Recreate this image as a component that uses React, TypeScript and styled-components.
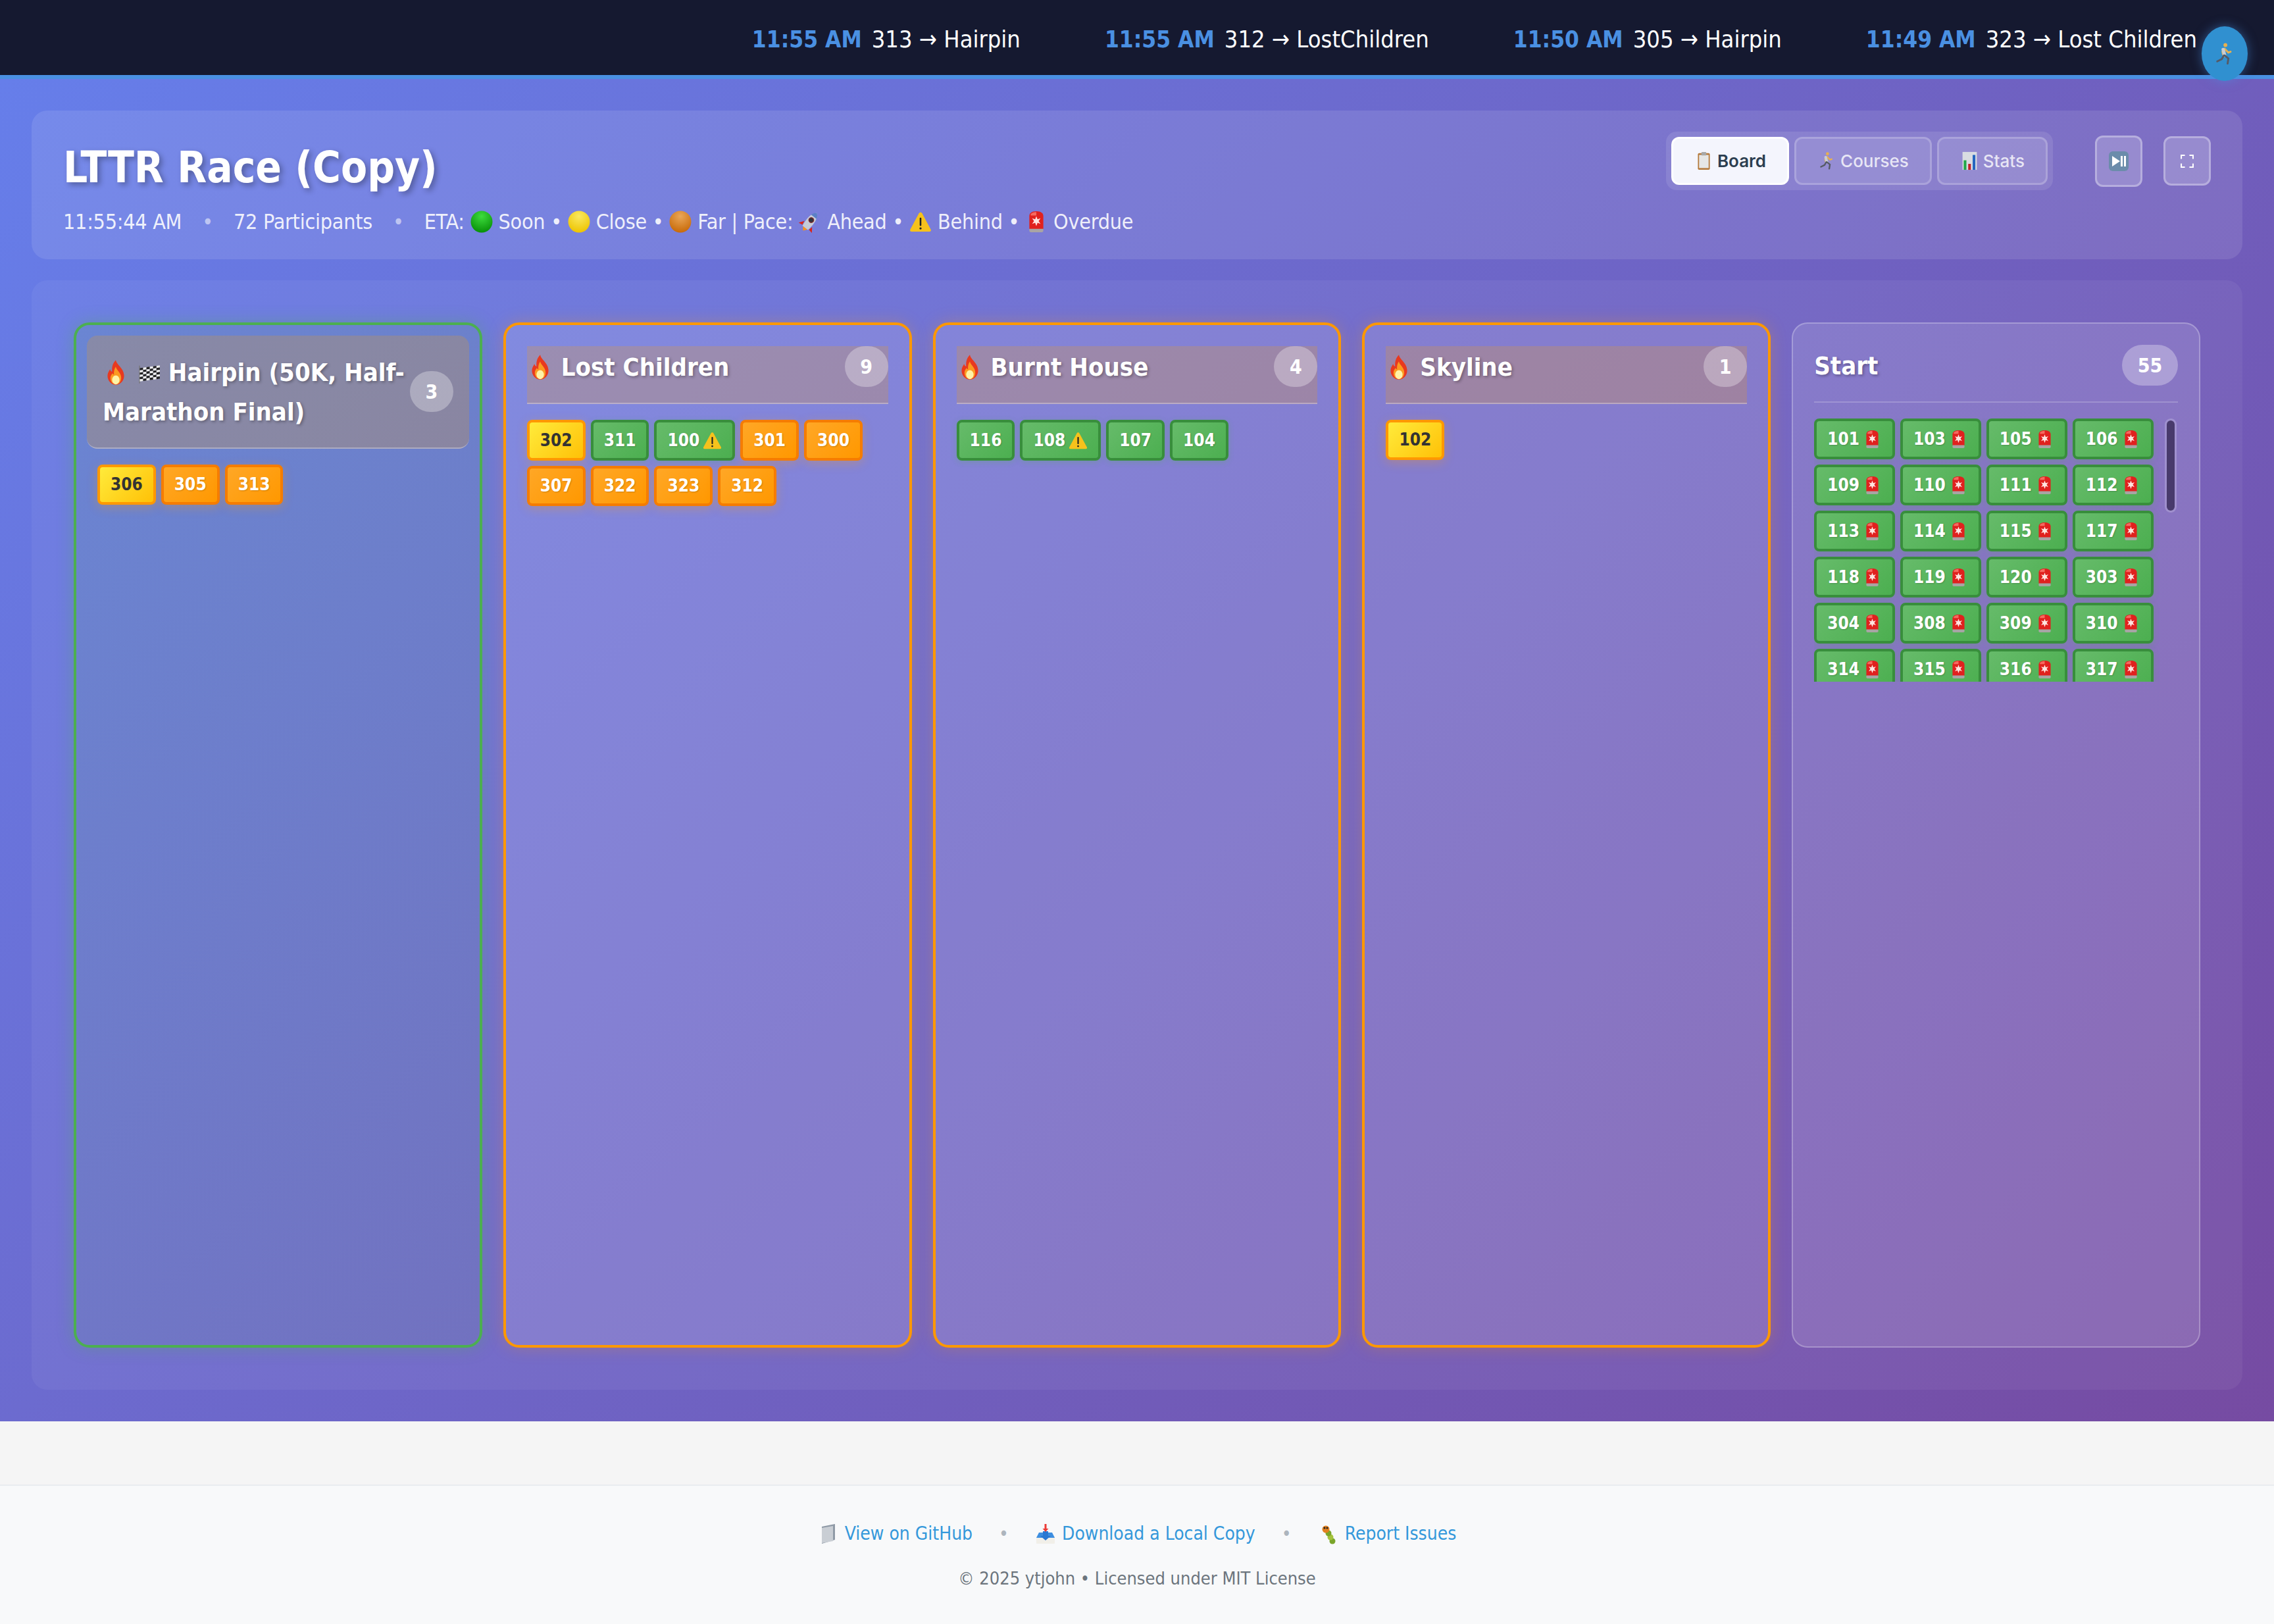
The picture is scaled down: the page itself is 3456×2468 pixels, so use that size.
import React, { FC } from 'react';
import styled, { createGlobalStyle, css } from 'styled-components';

type EmojiKind =
  | 'fire' | 'flag' | 'green' | 'yellow' | 'orange' | 'rocket' | 'warning' | 'siren'
  | 'clipboard' | 'runner' | 'chart' | 'playpause' | 'fullscreen' | 'folder' | 'inbox' | 'bug';

type TileTone = 'yellow' | 'orange' | 'green';

type TileData = { id: number; tone: TileTone; mark?: 'warning' | 'siren' };

const GlobalStyle = createGlobalStyle`
  html, body {
    margin: 0;
    padding: 0;
    background: #f5f5f5;
  }
  body {
    font-family: "DejaVu Sans", Verdana, sans-serif;
    font-stretch: condensed;
  }
  * {
    box-sizing: border-box;
  }
`;

const Page = styled.div`
  width: 3456px;
  height: 2468px;
  display: flex;
  flex-direction: column;
  position: relative;
  overflow: hidden;
`;

const Ticker = styled.div`
  height: 120px;
  flex: none;
  background: #151930;
  border-bottom: 6px solid #4a90e2;
  display: flex;
  align-items: center;
  justify-content: flex-end;
  gap: 128px;
  padding: 4px 117px 0 0;
  font-size: 36px;
  color: #fff;
`;

const TickerItem = styled.div`
  white-space: nowrap;
`;

const TickerTime = styled.span`
  font-size: 35px;
  font-weight: 700;
  color: #4a90e2;
  margin-right: 15px;
`;

const RunnerBadge = styled.div`
  position: absolute;
  top: 40px;
  right: 40px;
  width: 70px;
  height: 83px;
  border-radius: 50%;
  background: #3090d0;
  box-shadow: 0 0 16px rgba(74, 144, 226, 0.5);
  display: flex;
  align-items: center;
  justify-content: center;
`;

const Main = styled.main`
  height: 2040px;
  flex: none;
  background: linear-gradient(135deg, #667eea 0%, #764ba2 100%);
  padding: 48px;
  display: flex;
  flex-direction: column;
  gap: 32px;
`;

const HeaderCard = styled.header`
  height: 226px;
  flex: none;
  border-radius: 24px;
  background: rgba(255, 255, 255, 0.1);
  padding: 32px 48px;
  display: flex;
  justify-content: space-between;
  align-items: flex-start;
`;

const Title = styled.h1`
  margin: 13px 0 0;
  font-size: 65px;
  line-height: 84px;
  font-weight: 700;
  color: #fff;
  text-shadow: 4px 4px 8px rgba(0, 0, 0, 0.3);
`;

const SubLine = styled.div`
  margin-top: 18px;
  display: flex;
  align-items: center;
  gap: 31px;
  font-size: 32px;
  letter-spacing: -0.25px;
  line-height: 44px;
  color: rgba(255, 255, 255, 0.9);
  white-space: nowrap;
`;

const SubDot = styled.span`
  opacity: 0.6;
`;

const HeaderControls = styled.div`
  display: flex;
  align-items: flex-start;
  gap: 32px;
`;

const TabGroup = styled.nav`
  display: flex;
  gap: 8px;
  padding: 8px;
  border-radius: 16px;
  background: rgba(255, 255, 255, 0.1);
  margin-right: 32px;
`;

const Tab = styled.div<{ $active?: boolean }>`
  height: 73px;
  padding: 0 32px;
  display: flex;
  align-items: center;
  gap: 6px;
  border-radius: 12px;
  font-family: Inter, sans-serif;
  font-stretch: normal;
  font-size: 26px;
  border: 3px solid rgba(255, 255, 255, 0.2);
  ${({ $active }) =>
    $active
      ? css`
          background: #f4f5fd;
          border-color: #fff;
          color: #2c3e50;
          font-weight: 600;
        `
      : css`
          background: rgba(255, 255, 255, 0.1);
          color: rgba(255, 255, 255, 0.8);
          font-weight: 500;
        `}
`;

const IconButton = styled.div<{ $tall?: boolean }>`
  width: 72px;
  height: ${({ $tall }) => ($tall ? 78 : 75)}px;
  margin-top: ${({ $tall }) => ($tall ? 6 : 7)}px;
  border-radius: 12px;
  border: 3px solid rgba(255, 255, 255, 0.3);
  background: rgba(255, 255, 255, 0.2);
  display: flex;
  align-items: center;
  justify-content: center;
`;

const BoardPanel = styled.section`
  height: 1686px;
  flex: none;
  border-radius: 24px;
  background: rgba(255, 255, 255, 0.05);
  padding: 64px;
  display: grid;
  grid-template-columns: repeat(5, 1fr);
  gap: 32px;
`;

const Column = styled.div<{ $variant: 'finish' | 'hot' | 'start' }>`
  min-width: 0;
  border-radius: 24px;
  display: flex;
  flex-direction: column;
  ${({ $variant }) =>
    $variant === 'finish' &&
    css`
      border: 4px solid #4caf50;
      background: linear-gradient(170deg, rgba(76, 175, 80, 0.12), rgba(76, 175, 80, 0.08));
      box-shadow: 0 0 24px rgba(76, 175, 80, 0.35);
      padding: 16px 32px;
    `}
  ${({ $variant }) =>
    $variant === 'hot' &&
    css`
      border: 4px solid #ff9800;
      background: rgba(255, 255, 255, 0.12);
      box-shadow: 0 0 24px rgba(255, 152, 0, 0.25);
      padding: 32px;
    `}
  ${({ $variant }) =>
    $variant === 'start' &&
    css`
      border: 2px solid rgba(255, 255, 255, 0.25);
      background: rgba(255, 255, 255, 0.12);
      padding: 32px;
    `}
`;

const ColumnHead = styled.div<{ $variant: 'finish' | 'hot' | 'start' }>`
  display: flex;
  justify-content: space-between;
  margin-bottom: 24px;
  color: #fff;
  ${({ $variant }) =>
    $variant === 'finish' &&
    css`
      margin: 0 -16px 24px;
      padding: 24px;
      height: 172px;
      align-items: center;
      background: rgba(255, 160, 0, 0.2);
      border-radius: 16px;
      border-bottom: 2px solid rgba(255, 255, 255, 0.3);
    `}
  ${({ $variant }) =>
    $variant === 'hot' &&
    css`
      height: 88px;
      padding-bottom: 24px;
      align-items: flex-start;
      background: rgba(255, 160, 0, 0.2);
      border-bottom: 2px solid rgba(255, 255, 255, 0.3);
    `}
  ${({ $variant }) =>
    $variant === 'start' &&
    css`
      height: 88px;
      padding-bottom: 24px;
      align-items: flex-start;
      border-bottom: 2px solid rgba(255, 255, 255, 0.2);
    `}
`;

const ColumnTitle = styled.h2`
  margin: 2px 0 0;
  font-size: 38px;
  line-height: 60px;
  font-weight: 700;
  text-shadow: 2px 2px 4px rgba(0, 0, 0, 0.3);
`;

const CountPill = styled.span<{ $wide?: boolean }>`
  flex: none;
  width: ${({ $wide }) => ($wide ? 85 : 66)}px;
  height: 62px;
  border-radius: 31px;
  background: rgba(255, 255, 255, 0.3);
  display: flex;
  align-items: center;
  justify-content: center;
  font-size: 30px;
  font-weight: 700;
`;

const TileWrap = styled.div`
  display: flex;
  flex-wrap: wrap;
  align-content: flex-start;
  gap: 8px;
`;

const ScrollFrame = styled.div`
  position: relative;
  height: 400px;
`;

const ScrollTileWrap = styled(TileWrap)`
  height: 100%;
  overflow-y: scroll;
  scrollbar-width: none;
`;

const ScrollThumb = styled.div`
  position: absolute;
  top: 0;
  right: 2px;
  width: 18px;
  height: 143px;
  background: #483a6c;
  border: 3px solid rgba(255, 255, 255, 0.2);
  background-clip: padding-box;
  border-radius: 10px;
`;

const toneStyles = {
  yellow: css`
    background: linear-gradient(135deg, #ffeb3b, #ffc107);
    border-color: #ff9800;
    color: #333;
    box-shadow: 0 4px 16px rgba(255, 152, 0, 0.3);
  `,
  orange: css`
    background: linear-gradient(135deg, #ffa726, #ff9800);
    border-color: #f57c00;
    color: #fff;
    text-shadow: 1px 1px 2px rgba(0, 0, 0, 0.2);
    box-shadow: 0 4px 16px rgba(255, 152, 0, 0.3);
  `,
  green: css`
    background: linear-gradient(135deg, #66bb6a, #4caf50);
    border-color: #388e3c;
    color: #fff;
    text-shadow: 1px 1px 2px rgba(0, 0, 0, 0.2);
    box-shadow: 0 2px 8px rgba(76, 175, 80, 0.3);
  `,
};

const Tile = styled.div<{ $tone: TileTone; $marked?: boolean }>`
  flex: none;
  min-width: 88px;
  border: 4px solid;
  border-radius: 8px;
  padding: 8px 16px;
  display: flex;
  align-items: center;
  gap: 5px;
  font-size: 26px;
  font-weight: 700;
  line-height: ${({ $marked }) => ($marked ? 38 : 37)}px;
  justify-content: center;
  ${({ $tone }) => toneStyles[$tone]}
`;

const Spacer = styled.div`
  height: 96px;
  flex: none;
  background: #f5f5f5;
`;

const Footer = styled.footer`
  flex: 1;
  background: #f8f9fa;
  border-top: 2px solid #e9ecef;
  display: flex;
  flex-direction: column;
  align-items: center;
  padding-top: 53px;
`;

const FooterLinks = styled.div`
  display: flex;
  align-items: center;
  gap: 40px;
  font-size: 28px;
  line-height: 40px;
`;

const FooterLink = styled.a`
  color: #3498db;
  display: flex;
  align-items: center;
  gap: 9px;
`;

const FooterDot = styled.span`
  color: #adb5bd;
`;

const Copyright = styled.div`
  margin-top: 30px;
  font-size: 27px;
  line-height: 36px;
  color: #6c757d;
`;

const EmojiSvg = styled.svg`
  display: inline-block;
  vertical-align: -0.18em;
  flex: none;
`;

const Flame = () => (
  <>
    <path d="M16 1c1 6 9 9 10 18 .6 7-4.500 12-10 12S5.400 26 6 19c.3-3 2-5 3-7 .5 2 1.500 3 2.500 3C11 10 12 5 16 1z" fill="#e8391f" />
    <path d="M16 9c.5 4 6 7 6.500 12.500C23 27 19.500 30.500 16 30.500S9 27 9.500 22c.3-2.500 1.500-3.500 2.500-5 .5 1 1 1.500 1.700 1.500C13.500 15 14 12 16 9z" fill="#fb9a22" />
    <ellipse cx="16" cy="25" rx="4.500" ry="5.500" fill="#fff3a8" />
  </>
);

const CheckerFlag = () => (
  <>
    <rect x="3" y="5" width="1.200" height="24" fill="#777" />
    <g transform="skewY(-8) translate(0 3)">
      {Array.from({ length: 36 }, (_, i) => (
        <rect key={i} x={4 + (i % 6) * 4.500} y={6 + Math.floor(i / 6) * 3} width="4.500" height="3" fill={(i + Math.floor(i / 6)) % 2 ? '#eee' : '#222'} />
      ))}
    </g>
  </>
);

const Ball: FC<{ light: string; dark: string; id: string }> = ({ light, dark, id }) => (
  <>
    <defs>
      <radialGradient id={id} cx="50%" cy="25%" r="75%">
        <stop offset="0" stopColor={light} />
        <stop offset="1" stopColor={dark} />
      </radialGradient>
    </defs>
    <circle cx="16" cy="16" r="15.500" fill={`url(#${id})`} />
  </>
);

const Rocket = () => (
  <g transform="rotate(38 16 16)">
    <path d="M9 20l-5 7 6-1zM23 20l5 7-6-1z" fill="#d9261c" />
    <path d="M12 27l4 5 4-5z" fill="#f7941e" />
    <path d="M16 0c6 5 7 14 5 27H11C9 14 10 5 16 0z" fill="#c6ccd8" />
    <path d="M16 0c2.500 2 4 4 5 7H11c1-3 2.500-5 5-7z" fill="#5b7fc7" />
    <circle cx="16" cy="13" r="3.500" fill="#30343f" stroke="#8b2a2a" strokeWidth="1.200" />
  </g>
);

const WarningSign = () => (
  <>
    <path d="M16 2.500c1 0 1.700.5 2.300 1.500l12.400 23c.8 1.600-.1 3-1.900 3H3.200c-1.800 0-2.700-1.400-1.900-3l12.400-23c.6-1 1.300-1.500 2.300-1.500z" fill="#f6c21c" />
    <rect x="14.800" y="10" width="2.400" height="12" rx="1" fill="#222" />
    <circle cx="16" cy="25.500" r="1.600" fill="#222" />
  </>
);

const Siren = () => (
  <>
    <rect x="6" y="25" width="20" height="6" rx="2" fill="#a9a4a4" />
    <path d="M6 26V8c0-4 3-7 10-7s10 3 10 7v18z" fill="#e0211e" />
    <path d="M8 5c2-2 4-3 8-3v5H8z" fill="#f56a60" />
    <path d="M16 8l1.700 4.500 4.300-1.500-2.700 4 2.700 4-4.300-1.500-1.700 4.500-1.700-4.500-4.300 1.500 2.700-4-2.700-4 4.300 1.500z" fill="#ffe4e0" />
  </>
);

const Clipboard = () => (
  <>
    <rect x="6" y="3" width="20" height="28" rx="2" fill="#b57a3c" />
    <rect x="8" y="6" width="16" height="22" fill="#e6e6e6" />
    <rect x="12" y="1" width="8" height="6" rx="1" fill="#a8a8a8" />
  </>
);

const Runner = () => (
  <g stroke="#e9b04e" strokeWidth="2.600" strokeLinecap="round" fill="none">
    <circle cx="17" cy="4" r="2.600" fill="#e9b04e" stroke="none" />
    <path d="M16 9l-3 4 1 4M16 9l5 5 3-1" />
    <path d="M14 10l2 8" stroke="#c8ccd4" strokeWidth="4.500" />
    <path d="M16 18l5 4-1 7M15 18l-3 5-6 3" stroke="#555a66" />
  </g>
);

const Chart = () => (
  <>
    <rect x="4" y="1" width="24" height="30" fill="#d9dce2" />
    <rect x="6" y="15" width="4.500" height="16" fill="#20a84a" />
    <rect x="13.500" y="21" width="4.500" height="10" fill="#c4212c" />
    <rect x="21" y="6" width="4.500" height="25" fill="#2566c0" />
  </>
);

const PlayPause = () => (
  <>
    <rect x="1" y="1" width="30" height="30" rx="6" fill="#6b8cab" />
    <path d="M6 8l12 8-12 8z" fill="#fff" />
    <rect x="19" y="8" width="3" height="16" fill="#fff" />
    <rect x="24" y="8" width="3" height="16" fill="#fff" />
  </>
);

const Fullscreen = () => (
  <path d="M3 11V3h8M21 3h8v8M29 21v8h-8M11 29H3v-8" stroke="#fff" strokeWidth="3" fill="none" />
);

const Folder = () => (
  <>
    <path d="M6 5l20-4v24L6 31z" fill="#8f9aa6" />
    <path d="M6 7l17-3v23L6 30z" fill="#c9ced4" />
  </>
);

const Inbox = () => (
  <>
    <path d="M2 20h28v10a1 1 0 0 1-1 1H3a1 1 0 0 1-1-1z" fill="#f1efe9" />
    <path d="M6 14h20l4 8H2z" fill="#3d8ee0" />
    <path d="M12 12h8v7h4l-8 7-8-7h4z" fill="#2a78d2" />
    <path d="M14.500 1h3v7h3l-4.500 5-4.500-5h3z" fill="#ec3b36" />
  </>
);

const Bug = () => (
  <>
    <circle cx="22" cy="27" r="4.500" fill="#7aa52a" />
    <circle cx="19" cy="21" r="4.500" fill="#a4c23a" />
    <circle cx="16" cy="15" r="4.500" fill="#7aa52a" />
    <circle cx="12" cy="9" r="5.500" fill="#e2801f" />
    <circle cx="10" cy="7" r="1.500" fill="#222" />
    <circle cx="14" cy="7" r="1.500" fill="#222" />
  </>
);

const artwork: Record<EmojiKind, React.ReactNode> = {
  fire: <Flame />,
  flag: <CheckerFlag />,
  green: <Ball light="#3ddc3d" dark="#089008" id="ball-green" />,
  yellow: <Ball light="#f9e860" dark="#eec400" id="ball-yellow" />,
  orange: <Ball light="#eaa658" dark="#c86a08" id="ball-orange" />,
  rocket: <Rocket />,
  warning: <WarningSign />,
  siren: <Siren />,
  clipboard: <Clipboard />,
  runner: <Runner />,
  chart: <Chart />,
  playpause: <PlayPause />,
  fullscreen: <Fullscreen />,
  folder: <Folder />,
  inbox: <Inbox />,
  bug: <Bug />,
};

const Emoji: FC<{ kind: EmojiKind; size: number }> = ({ kind, size }) => (
  <EmojiSvg width={size} height={size} viewBox="0 0 32 32">
    {artwork[kind]}
  </EmojiSvg>
);

const tiles = (list: Array<number | [number, 'warning' | 'siren']>, tone: TileTone): TileData[] =>
  list.map((item) =>
    Array.isArray(item) ? { id: item[0], tone, mark: item[1] } : { id: item, tone }
  );

const startIds = [
  101, 103, 105, 106, 109, 110, 111, 112, 113, 114, 115, 117, 118, 119, 120, 303, 304, 308, 309, 310,
  314, 315, 316, 317, 318, 319, 320, 321, 324, 325, 326, 327, 328, 329, 330, 331, 332, 333, 334, 335,
  336, 337, 338, 339, 340, 341, 342, 343, 344, 345, 346, 347, 348, 349, 350,
];

const hotColumns = [
  {
    name: 'Lost Children',
    count: 9,
    tiles: [
      { id: 302, tone: 'yellow' as TileTone },
      { id: 311, tone: 'green' as TileTone },
      { id: 100, tone: 'green' as TileTone, mark: 'warning' as const },
      ...tiles([301, 300, 307, 322, 323, 312], 'orange'),
    ],
  },
  {
    name: 'Burnt House',
    count: 4,
    tiles: tiles([116, [108, 'warning'], 107, 104], 'green'),
  },
  { name: 'Skyline', count: 1, tiles: tiles([102], 'yellow') },
];

const finishTiles: TileData[] = [
  { id: 306, tone: 'yellow' },
  ...tiles([305, 313], 'orange'),
];

const feed = [
  ['11:55 AM', '313 → Hairpin'],
  ['11:55 AM', '312 → LostChildren'],
  ['11:50 AM', '305 → Hairpin'],
  ['11:49 AM', '323 → Lost Children'],
];

const BibTile: FC<{ tile: TileData }> = ({ tile }) => (
  <Tile $tone={tile.tone} $marked={!!tile.mark}>
    {tile.id}
    {tile.mark && <Emoji kind={tile.mark} size={29} />}
  </Tile>
);

const App: FC = () => {
  return (
    <>
      <GlobalStyle />
      <Page>
        <Ticker>
          {feed.map(([time, text]) => (
            <TickerItem key={text}>
              <TickerTime>{time}</TickerTime>
              {text}
            </TickerItem>
          ))}
        </Ticker>
        <RunnerBadge>
          <Emoji kind="runner" size={36} />
        </RunnerBadge>
        <Main>
          <HeaderCard>
            <div>
              <Title>LTTR Race (Copy)</Title>
              <SubLine>
                <span>11:55:44 AM</span>
                <SubDot>•</SubDot>
                <span>72 Participants</span>
                <SubDot>•</SubDot>
                <span>
                  ETA: <Emoji kind="green" size={34} /> Soon • <Emoji kind="yellow" size={34} /> Close •{' '}
                  <Emoji kind="orange" size={34} /> Far | Pace: <Emoji kind="rocket" size={34} /> Ahead •{' '}
                  <Emoji kind="warning" size={34} /> Behind • <Emoji kind="siren" size={34} /> Overdue
                </span>
              </SubLine>
            </div>
            <HeaderControls>
              <TabGroup>
                <Tab $active>
                  <Emoji kind="clipboard" size={29} />
                  Board
                </Tab>
                <Tab>
                  <Emoji kind="runner" size={29} />
                  Courses
                </Tab>
                <Tab>
                  <Emoji kind="chart" size={29} />
                  Stats
                </Tab>
              </TabGroup>
              <IconButton $tall>
                <Emoji kind="playpause" size={32} />
              </IconButton>
              <IconButton>
                <Emoji kind="fullscreen" size={22} />
              </IconButton>
            </HeaderControls>
          </HeaderCard>
          <BoardPanel>
            <Column $variant="finish">
              <ColumnHead $variant="finish">
                <ColumnTitle>
                  <Emoji kind="fire" size={40} /> <Emoji kind="flag" size={36} /> Hairpin (50K, Half-Marathon Final)
                </ColumnTitle>
                <CountPill>3</CountPill>
              </ColumnHead>
              <TileWrap>
                {finishTiles.map((tile) => (
                  <BibTile key={tile.id} tile={tile} />
                ))}
              </TileWrap>
            </Column>
            {hotColumns.map((col) => (
              <Column $variant="hot" key={col.name}>
                <ColumnHead $variant="hot">
                  <ColumnTitle>
                    <Emoji kind="fire" size={40} /> {col.name}
                  </ColumnTitle>
                  <CountPill>{col.count}</CountPill>
                </ColumnHead>
                <TileWrap>
                  {col.tiles.map((tile) => (
                    <BibTile key={tile.id} tile={tile} />
                  ))}
                </TileWrap>
              </Column>
            ))}
            <Column $variant="start">
              <ColumnHead $variant="start">
                <ColumnTitle>Start</ColumnTitle>
                <CountPill $wide>55</CountPill>
              </ColumnHead>
              <ScrollFrame>
                <ScrollTileWrap>
                  {startIds.map((id) => (
                    <BibTile key={id} tile={{ id, tone: 'green', mark: 'siren' }} />
                  ))}
                </ScrollTileWrap>
                <ScrollThumb />
              </ScrollFrame>
            </Column>
          </BoardPanel>
        </Main>
        <Spacer />
        <Footer>
          <FooterLinks>
            <FooterLink>
              <Emoji kind="folder" size={32} />
              View on GitHub
            </FooterLink>
            <FooterDot>•</FooterDot>
            <FooterLink>
              <Emoji kind="inbox" size={32} />
              Download a Local Copy
            </FooterLink>
            <FooterDot>•</FooterDot>
            <FooterLink>
              <Emoji kind="bug" size={32} />
              Report Issues
            </FooterLink>
          </FooterLinks>
          <Copyright>© 2025 ytjohn • Licensed under MIT License</Copyright>
        </Footer>
      </Page>
    </>
  );
};

export default App;
